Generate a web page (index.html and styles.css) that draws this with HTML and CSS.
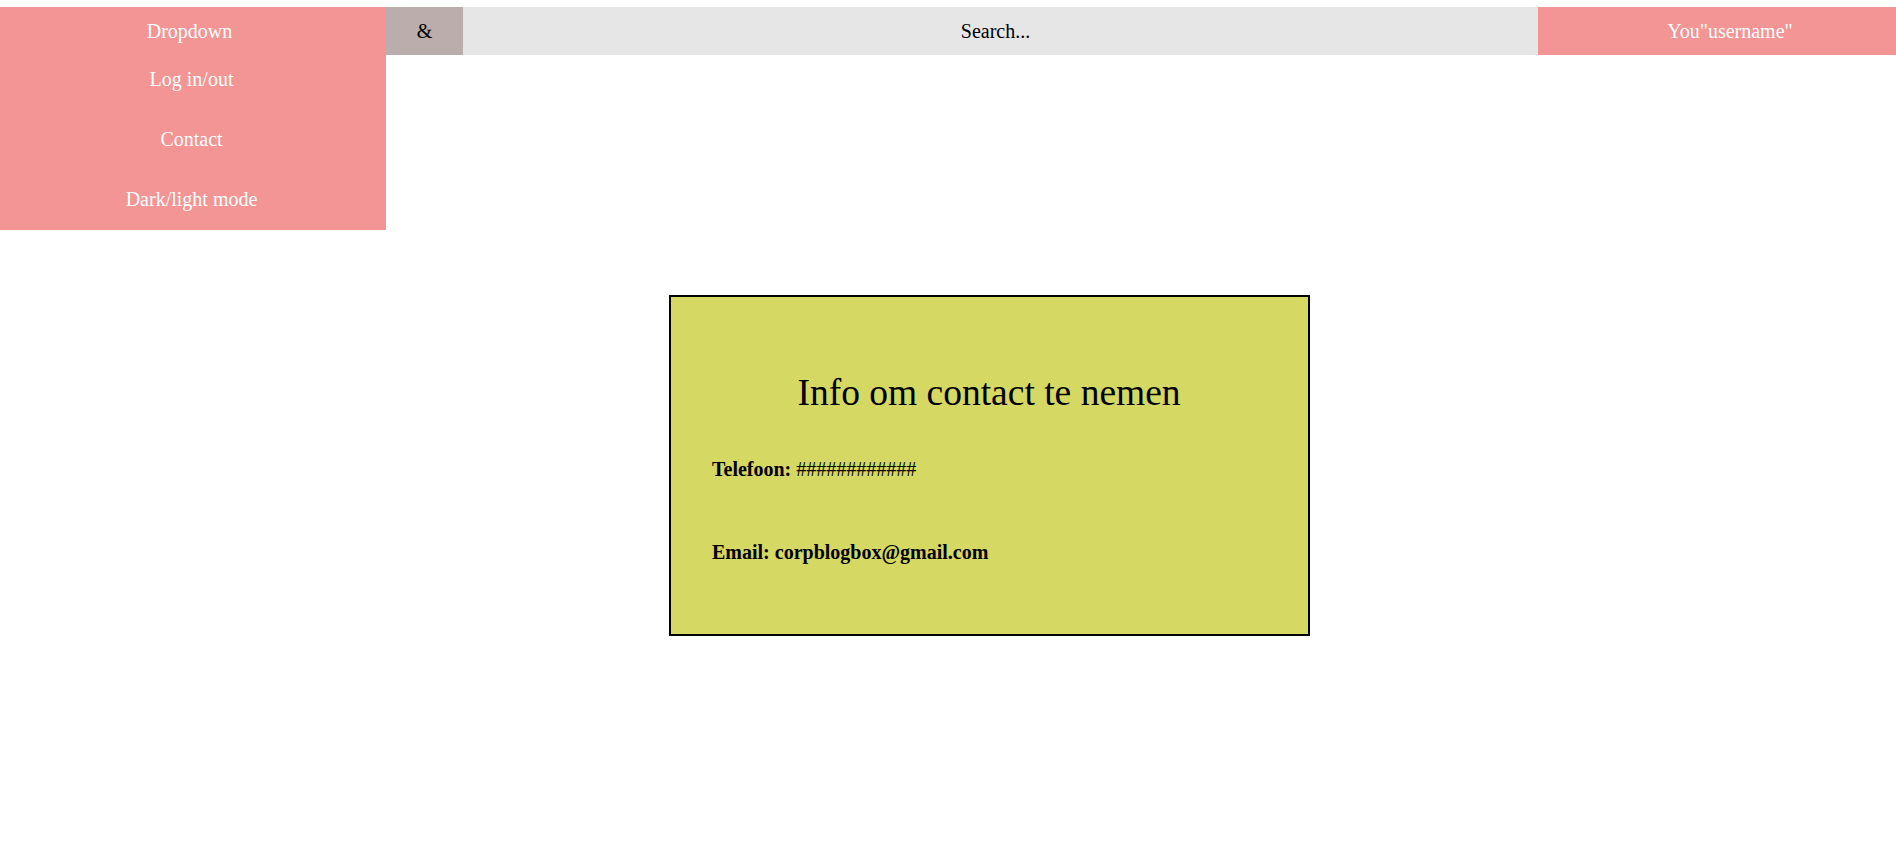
FILE: index.html
```html
<!DOCTYPE html>
<html lang="nl">
<head>
<meta charset="utf-8">
<title>Contact</title>
<link rel="stylesheet" href="styles.css">
</head>
<body>
<header class="topbar">
  <div class="dropdown">
    <div class="dropdown-btn">Dropdown</div>
    <nav class="dropdown-menu">
      <div class="menu-item">Log in/out</div>
      <div class="menu-item">Contact</div>
      <div class="menu-item">Dark/light mode</div>
    </nav>
  </div>
  <div class="amp">&amp;</div>
  <div class="search">Search...</div>
  <div class="user">You"username"</div>
</header>
<main class="main">
  <section class="card">
    <h1 class="card-title">Info om contact te nemen</h1>
    <p class="line line-phone"><b>Telefoon:</b> ############</p>
    <p class="line line-mail"><b>Email: corpblogbox@gmail.com</b></p>
  </section>
</main>
</body>
</html>
```

FILE: styles.css
```css
html, body {
  margin: 0;
  padding: 0;
  background: #ffffff;
}

body {
  font-family: "Liberation Serif", "Times New Roman", serif;
  font-size: 20px;
  color: #000;
}

.topbar {
  display: flex;
  margin-top: 7px;
  height: 48px;
  line-height: 48px;
  text-align: center;
}

.dropdown {
  position: relative;
  width: 386px;
  flex: 0 0 386px;
  background: #f29594;
  color: #ffffff;
}

.dropdown-btn {
  height: 48px;
  padding-right: 7px;
}

.dropdown-menu {
  position: absolute;
  top: 48px;
  left: 0;
  width: 386px;
  background: #f29594;
  display: flex;
  flex-direction: column;
  gap: 12px;
  padding-bottom: 7px;
}

.menu-item {
  height: 48px;
  line-height: 48px;
  padding-right: 3px;
  color: #ffffff;
}

.amp {
  flex: 0 0 77px;
  background: #baadab;
  color: #000;
}

.search {
  flex: 1 1 auto;
  padding-right: 10px;
  background: #e6e6e6;
  color: #000;
}

.user {
  flex: 0 0 358px;
  box-sizing: border-box;
  padding-left: 26px;
  background: #f29594;
  color: #ffffff;
}

.main {
  display: flex;
  justify-content: center;
  padding-left: 83px;
  padding-top: 240px;
}

.card {
  box-sizing: border-box;
  width: 641px;
  height: 341px;
  border: 2px solid #000;
  background: #d5d863;
  padding: 74px 42px 0 41px;
}

.card-title {
  margin: 0;
  font-size: 37.5px;
  font-weight: normal;
  line-height: 44px;
  text-align: center;
}

.line {
  margin: 0;
  font-size: 20px;
  line-height: 24px;
}

.line-phone {
  margin-top: 42px;
}

.line-mail {
  margin-top: 59px;
}
```
